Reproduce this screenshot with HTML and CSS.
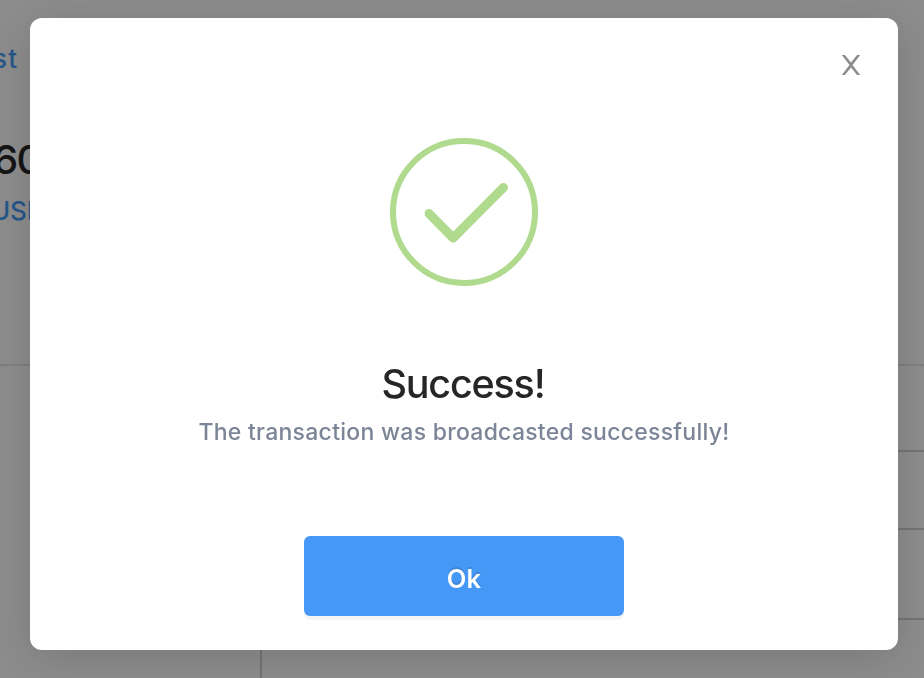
FILE: index.html
```
<!DOCTYPE html>
<html lang="en">
<head>
<meta charset="utf-8">
<title>Success</title>
<link rel="stylesheet" href="styles.css">
</head>
<body>
<main class="page">
  <header class="summary">
    <a class="crumb">st</a>
    <div class="amount">60</div>
    <a class="currency">USD</a>
  </header>
  <section class="content">
    <aside class="side"></aside>
    <div class="rows">
      <div class="row row-first"></div>
      <div class="row row-middle"></div>
      <div class="row row-last"></div>
    </div>
  </section>
</main>
<div class="overlay">
  <div class="modal" role="dialog" aria-modal="true">
    <button class="close" aria-label="Close">
      <svg width="20" height="22" viewBox="0 0 20 22"><path d="M.8 1h3.1L10 8.4 16.1 1h3.1l-7.7 10 7.7 10h-3.1L10 13.6 3.9 21H.8l7.7-10z" fill="#8c8c8c"/></svg>
    </button>
    <svg class="check" width="148" height="148" viewBox="0 0 148 148" fill="none" stroke="#b0da8e">
      <circle cx="74" cy="74" r="71" stroke-width="6"/>
      <path d="M39 75.5 63.2 100 113.5 49.5" stroke-width="9" stroke-linecap="round" stroke-linejoin="round"/>
    </svg>
    <h1 class="title">Success!</h1>
    <p class="message">The transaction was broadcasted successfully!</p>
    <button class="ok">Ok</button>
  </div>
</div>
</body>
</html>
```
FILE: styles.css
```
* { box-sizing: border-box; }
body {
  margin: 0;
  height: 678px;
  overflow: hidden;
  font-family: Inter, "Liberation Sans", sans-serif;
  background: #fff;
}
.page { height: 678px; display: flex; flex-direction: column; }
.summary {
  height: 366px;
  padding-top: 43px;
  border-bottom: 2px solid #e8e8e8;
  display: flex;
  flex-direction: column;
  align-items: flex-start;
}
.crumb, .currency { color: #459cfc; font-size: 26px; line-height: 32px; font-weight: 500; }
.crumb { margin-left: -7px; letter-spacing: 1.2px; }
.amount {
  margin: 61px 0 0 -7px;
  color: #262626;
  font-size: 40px;
  line-height: 48px;
  font-weight: 500;
  letter-spacing: -1.6px;
}
.currency { margin: 11px 0 0 -9px; letter-spacing: -0.2px; }
.content { flex: 1; display: grid; grid-template-columns: 262px 1fr; }
.side { border-right: 2px solid #d2d2d2; }
.row { border-bottom: 2px solid #d2d2d2; }
.row-first { height: 86px; }
.row-middle { height: 78px; }
.row-last { height: 90px; }
.overlay {
  position: fixed;
  inset: 0;
  padding: 18px 26px 28px 30px;
  background: rgba(0, 0, 0, 0.45);
}
.modal {
  position: relative;
  height: 632px;
  padding-top: 120px;
  display: flex;
  flex-direction: column;
  align-items: center;
  background: #fff;
  border-radius: 12px;
  box-shadow: 0 8px 48px rgba(0, 0, 0, 0.15);
}
.close {
  position: absolute;
  top: 36px;
  right: 37px;
  padding: 0;
  border: 0;
  background: none;
  line-height: 0;
}
.title {
  margin: 74px 0 0;
  padding-right: 2px;
  color: #262626;
  font-size: 39.5px;
  line-height: 48px;
  font-weight: 500;
  letter-spacing: -1.2px;
}
.message {
  margin: 8px 0 0;
  color: #7c8497;
  font-size: 23px;
  font-weight: 500;
  line-height: 32px;
  letter-spacing: 0.27px;
  white-space: nowrap;
}
.ok {
  width: 320px;
  height: 80px;
  margin-top: 88px;
  padding: 5px 0 0;
  border: 0;
  border-radius: 6px;
  background: #4598f5;
  color: #fff;
  font: 600 25.5px/32px Inter, "Liberation Sans", sans-serif;
  letter-spacing: 0.2px;
  text-shadow: 0 -2px 0 rgba(0, 0, 0, 0.12);
  box-shadow: 0 4px 0 rgba(0, 0, 0, 0.04);
}
```
